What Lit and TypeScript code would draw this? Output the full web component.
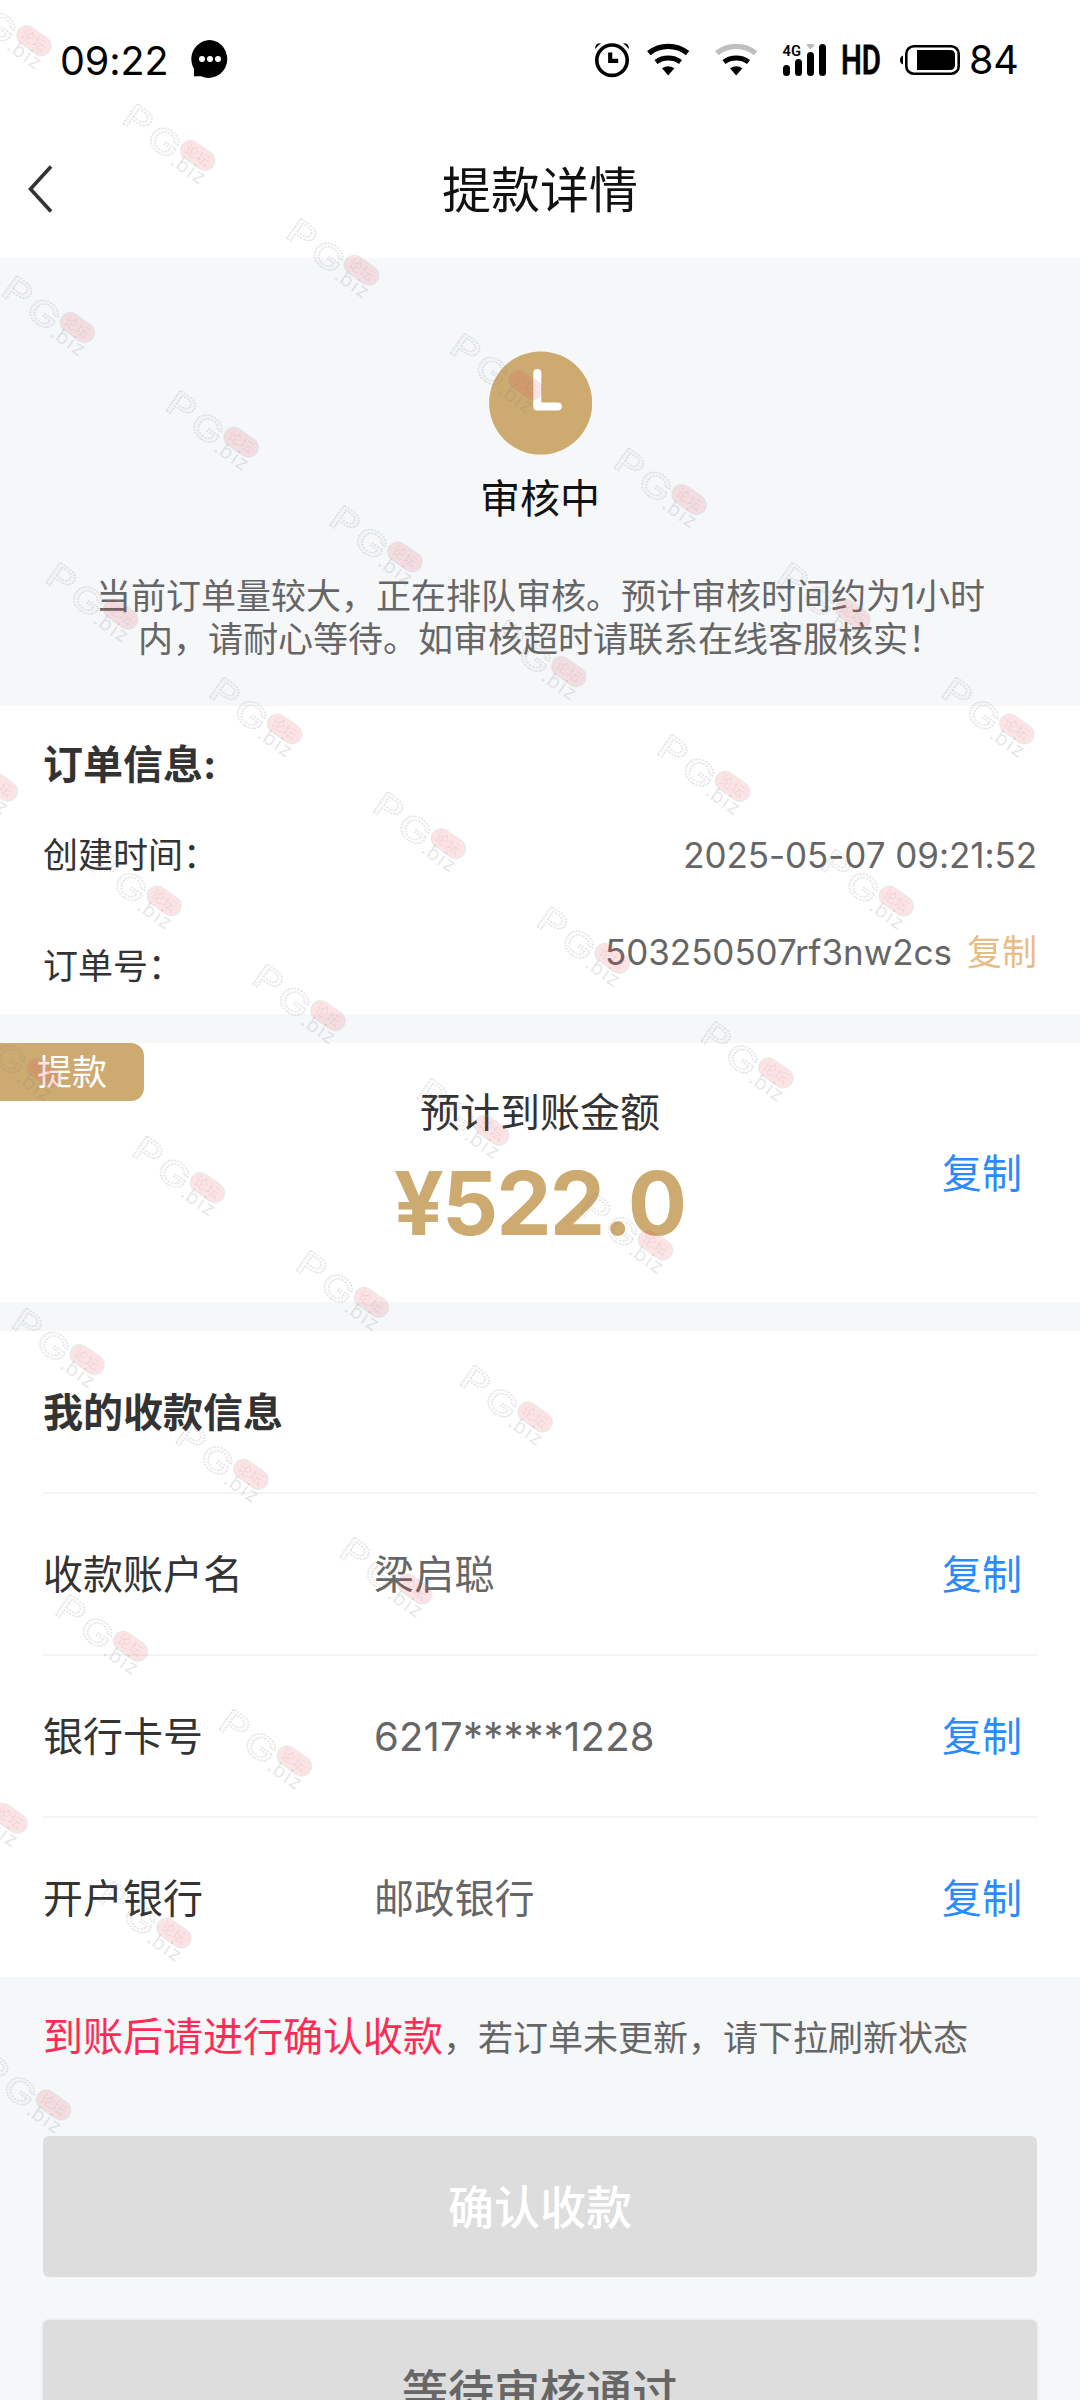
import { LitElement, html, css, svg } from "lit";
import { customElement, property } from "lit/decorators.js";

const FONT = css`Inter, "Noto Sans CJK SC", sans-serif`;

interface Account {
  label: string;
  value: string;
}

const ACCOUNTS: Account[] = [
  { label: "收款账户名", value: "梁启聪" },
  { label: "银行卡号", value: "6217*****1228" },
  { label: "开户银行", value: "邮政银行" },
];

@customElement("status-bar")
class StatusBar extends LitElement {
  static styles = css`
    :host {
      display: flex;
      height: 120px;
      box-sizing: border-box;
      padding: 0 62px 0 60px;
      align-items: center;
      font: 400 39.500px/60px ${FONT};
      color: #000;
    }
    .time { width: 107px; letter-spacing: -0.1px; padding-top: 2px; }
    .chat { margin-left: 24px; }
    .spacer { flex: 1; }
    .battery { width: 49px; margin-left: 3px; text-align: right; letter-spacing: -0.3px; }
    svg { display: block; flex: none; }
    .tiny { font: 600 15.500px Roboto, sans-serif; }
    .hd { font: 500 40px Roboto, sans-serif; stroke: #000; stroke-width: 0.8; }
  `;
  render() {
    return html`
      <span class="time">09:22</span>
      <svg class="chat" width="40" height="42" viewBox="191 40 40 42">
        <path d="M210 41a18.500 19 0 1 1-9 36.200h-7v-7.500A19 19 0 0 1 210 41z" />
        <g fill="#fff"><circle cx="202" cy="60" r="3" /><circle cx="210" cy="60" r="3" /><circle cx="218" cy="60" r="3" /></g>
      </svg>
      <span class="spacer"></span>
      <svg width="374" height="60" viewBox="592 30 374 60">
        <g fill="none" stroke="#000">
          <circle cx="612" cy="60.200" r="15.200" stroke-width="3.600" />
          <path d="M610.200 52.500v8.300h8" stroke-width="4.200" />
        </g>
        <path d="M595 49q0-6 6-6zM629 49q0-6-6-6z" />
        ${[0, 68].map((dx, i) => svg`
          <g transform="translate(${dx} 0)" fill="none" stroke="#000">
            <path d="M648.800 53.200a31 31 0 0 1 38.800 0" stroke-width="5.400" stroke=${i ? "#bfbfbf" : "#000"} />
            <path d="M656 62a21 21 0 0 1 24.500 0" stroke-width="5" />
            <path d="M662 68.200q6.200-4 12.400 0l-6.200 7.400z" fill="#000" stroke="none" />
          </g>`)}
        <g stroke="#000" stroke-width="7" stroke-linecap="round">
          <path d="M786.500 68.500v4M798.500 62.500v10M810.500 55.500v17M822.500 47.500v25" />
        </g>
        <path d="M807 44h7v2l-3.500 3.500-3.500-3.500z" fill="#bfbfbf" />
        <text class="tiny" x="782.500" y="55.500" textLength="18.500" lengthAdjust="spacingAndGlyphs">4G</text>
        <text class="hd" x="841" y="74" textLength="40" lengthAdjust="spacingAndGlyphs">HD</text>
        <rect x="906.300" y="46.300" width="52.400" height="27.400" rx="7.500" fill="none" stroke="#000" stroke-width="2.600" />
        <path d="M917 50h33q5 0 5 5v10q0 5-5 5h-33zM903 55.500v9q-3-1-3-4.500t3-4.500z" />
      </svg>
      <span class="battery">84</span>
    `;
  }
}

@customElement("nav-header")
class NavHeader extends LitElement {
  static styles = css`
    :host {
      display: grid;
      grid-template-columns: 1fr auto 1fr;
      align-items: center;
      height: 138px;
      box-sizing: border-box;
      padding-top: 3px;
      font: 400 49px/70px ${FONT};
      color: #111;
    }
    svg { display: block; margin: -3px 0 0 28px; }
  `;
  render() {
    return html`
      <svg width="26" height="50" viewBox="0 0 26 50">
        <path d="M23 2.500L2.500 25 23 47.500" fill="none" stroke="#333" stroke-width="3.600" />
      </svg>
      <span>提款详情</span>
    `;
  }
}

@customElement("review-status")
class ReviewStatus extends LitElement {
  static styles = css`
    :host {
      display: flex;
      flex-direction: column;
      align-items: center;
      height: 448px;
      box-sizing: border-box;
      padding-top: 93px;
      font-family: ${FONT};
      text-align: center;
    }
    svg { display: block; }
    .state { margin-top: 14px; font-size: 40px; line-height: 60px; color: #111; }
    .note { margin-top: 46px; width: 902px; padding-left: 1px; font-size: 35px; line-height: 43px; color: #666; }
  `;
  render() {
    return html`
      <svg width="104" height="104" viewBox="0 0 104 104">
        <circle cx="52.700" cy="52" r="51.600" fill="#cdaa6f" />
        <path d="M49.300 22v33.500h20.500" fill="none" stroke="#fff" stroke-width="8" stroke-linecap="round" stroke-linejoin="round" />
      </svg>
      <div class="state">审核中</div>
      <div class="note">当前订单量较大，正在排队审核。预计审核时间约为1小时<br />内，请耐心等待。如审核超时请联系在线客服核实！</div>
    `;
  }
}

@customElement("order-info")
class OrderInfo extends LitElement {
  static styles = css`
    :host {
      display: block;
      height: 308px;
      box-sizing: border-box;
      padding: 29px 43px 0;
      background: #fff;
      font: 400 35px/52px ${FONT};
      color: #333;
      white-space: nowrap;
    }
    .heading { font-size: 40px; line-height: 60px; font-weight: 700; }
    .row { display: flex; justify-content: space-between; margin-top: 34px; }
    .order { margin-top: 45px; }
    .order .label { padding-top: 14px; }
    .value { color: #666; letter-spacing: -0.05px; }
    .copy { color: #e8bd83; margin-left: 15px; }
  `;
  render() {
    return html`
      <div class="heading">订单信息:</div>
      <div class="row"><span>创建时间：</span><span class="value">2025-05-07 09:21:52</span></div>
      <div class="row order">
        <span class="label">订单号：</span>
        <span><span class="value">503250507rf3nw2cs</span><span class="copy">复制</span></span>
      </div>
    `;
  }
}

@customElement("amount-card")
class AmountCard extends LitElement {
  static styles = css`
    :host {
      display: grid;
      grid-template-columns: 144px 1fr 144px;
      height: 259px;
      background: #fff;
      font: 400 40px/60px ${FONT};
      color: #333;
    }
    .badge {
      height: 58px;
      box-sizing: border-box;
      padding-left: 37px;
      border-radius: 0 13px 13px 0;
      background: #cdaa6f;
      color: #fff;
      font-size: 35px;
      line-height: 58px;
    }
    .center { text-align: center; padding-top: 40px; }
    .amount { font-size: 88px; line-height: 100px; font-weight: 700; color: #cdaa6f; margin: 10px 0 0 -1px; letter-spacing: -2px; }
    .copy { color: #2a8aff; padding: 101px 0 0 6px; }
  `;
  render() {
    return html`
      <div class="badge">提款</div>
      <div class="center">
        <div>预计到账金额</div>
        <div class="amount">¥522.0</div>
      </div>
      <div class="copy">复制</div>
    `;
  }
}

@customElement("payee-card")
class PayeeCard extends LitElement {
  static styles = css`
    :host {
      display: block;
      height: 646px;
      box-sizing: border-box;
      padding: 0 43px;
      background: #fff;
      font: 400 40px/60px ${FONT};
      color: #333;
    }
    .heading, .row { height: 162px; box-sizing: border-box; display: flex; align-items: center; }
    .heading { height: 161px; padding-top: 3px; font-weight: 700; }
    .row { border-top: 2px solid #f3f4f5; padding: 1px 15px 0 0; }
    .label { width: 331px; }
    .value { flex: 1; color: #666; letter-spacing: 0.2px; }
    .copy { color: #2a8aff; }
  `;
  render() {
    return html`
      <div class="heading">我的收款信息</div>
      ${ACCOUNTS.map((a) => html`
        <div class="row">
          <span class="label">${a.label}</span>
          <span class="value">${a.value}</span>
          <span class="copy">复制</span>
        </div>`)}
    `;
  }
}

@customElement("action-button")
class ActionButton extends LitElement {
  @property({ type: Boolean, reflect: true }) waiting = false;
  static styles = css`
    :host {
      display: flex;
      flex: none;
      height: 141px;
      align-items: center;
      justify-content: center;
      border-radius: 6px;
      background: #ddd;
      color: #fff;
      font: 500 46px/66px ${FONT};
    }
    :host([waiting]) { color: #666; box-shadow: 0 0 3px rgba(0, 0, 0, 0.12); }
  `;
  render() {
    return html`<slot></slot>`;
  }
}

/* Each diagonal run of marks starts one column further left as it goes down. */
const RUNS: Array<[number, number]> = [[0, 6], [0, 5], [0, 4], [-1, 3], [-1, 2], [-1, 1], [-1, 0], [-2, -1], [-2, -2]];

@customElement("water-mark")
class WaterMark extends LitElement {
  static styles = css`
    :host { display: block; pointer-events: none; }
    svg { display: block; }
    .brand { font: 500 34px Inter, sans-serif; fill: #84848e; fill-opacity: 0.04; stroke: #84848e; stroke-opacity: 0.24; stroke-width: 1.2; stroke-dasharray: 1.8 1; }
    .host { font: 400 20px Inter, sans-serif; fill: #84848e; fill-opacity: 0.2; }
    .pill { fill: #f04452; fill-opacity: 0.15; stroke: #7fe0dc; stroke-opacity: 0.14; stroke-width: 1.5; }
    .forum { font: 400 14px "Noto Sans CJK SC", sans-serif; fill: #5f8078; fill-opacity: 0.12; }
  `;
  render() {
    const marks = RUNS.flatMap(([from, to], k) =>
      Array.from({ length: to - from + 1 }, (_, i) => {
        const j = from + i;
        return [-43 + 43.400 * k + 163.800 * j, -11 + 286.700 * k + 114.700 * j];
      }));
    return html`
      <svg width="1080" height="2400" viewBox="0 0 1080 2400">
        ${marks.map(([x, y]) => svg`
          <g transform="translate(${x - 0.500} ${y + 22}) rotate(35)">
            <text class="brand" x="-2 22.500" y="-3 0" transform="scale(1.28 1)">PG</text>
            <rect class="pill" x="61.500" y="-30" width="38" height="20" rx="10" />
            <text class="forum" x="66" y="-15">论坛</text>
            <text class="host" x="62 68 82 88" y="3">.biz</text>
          </g>`)}
      </svg>
    `;
  }
}

@customElement("app-root")
class AppRoot extends LitElement {
  static styles = css`
    :host {
      display: block;
      position: relative;
      width: 1080px;
      height: 2400px;
      overflow: hidden;
      background: #f5f7f9;
      font-family: ${FONT};
    }
    .top { background: #fff; }
    .stack { display: flex; flex-direction: column; gap: 29px; }
    .tip { margin: 30px 43px 0; height: 60px; font-size: 35px; line-height: 60px; color: #666; white-space: nowrap; }
    .tip strong { font-size: 40px; font-weight: 400; color: #ff2b55; }
    .actions { display: flex; flex-direction: column; gap: 43px; padding: 69px 43px 0; }
    .overlay { position: absolute; inset: 0; }
  `;
  render() {
    return html`
      <div class="top">
        <status-bar></status-bar>
        <nav-header></nav-header>
      </div>
      <review-status></review-status>
      <div class="stack">
        <order-info></order-info>
        <amount-card></amount-card>
        <payee-card></payee-card>
      </div>
      <div class="tip"><strong>到账后请进行确认收款</strong>，若订单未更新，请下拉刷新状态</div>
      <div class="actions">
        <action-button>确认收款</action-button>
        <action-button waiting>等待审核通过</action-button>
      </div>
      <water-mark class="overlay"></water-mark>
    `;
  }
}
